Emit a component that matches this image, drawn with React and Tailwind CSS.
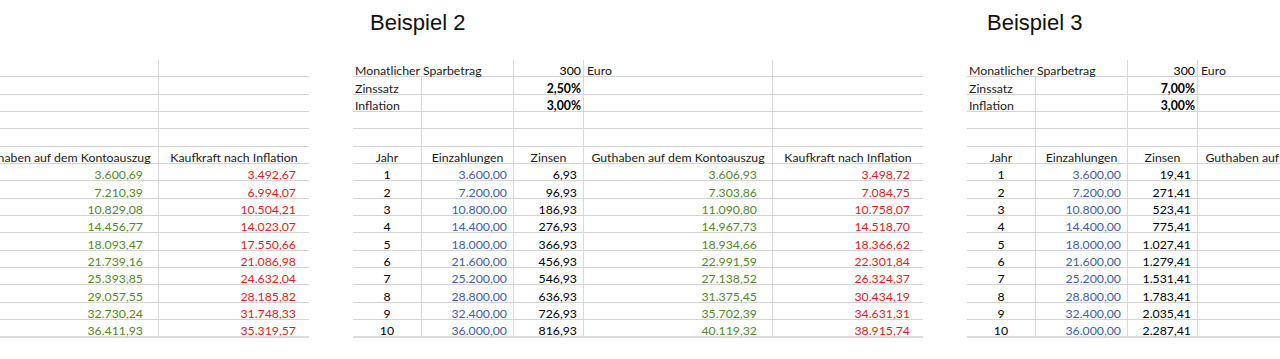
import React from "react";

const GREEN = "text-[#55882a]";
const BLUE = "text-[#3f60a6]";
const RED = "text-[#da1f26]";

const examples = [
  {
    title: "Beispiel 1",
    titleClass: "pl-[18px]",
    rate: "0,05%",
    zinsen: ["0,69", "10,39", "29,08", "56,77", "93,47", "139,16", "193,85", "257,55", "330,24", "411,93"],
    guthaben: ["3.600,69", "7.210,39", "10.829,08", "14.456,77", "18.093,47", "21.739,16", "25.393,85", "29.057,55", "32.730,24", "36.411,93"],
    kaufkraft: ["3.492,67", "6.994,07", "10.504,21", "14.023,07", "17.550,66", "21.086,98", "24.632,04", "28.185,82", "31.748,33", "35.319,57"],
  },
  {
    title: "Beispiel 2",
    titleClass: "pl-[17px]",
    rate: "2,50%",
    zinsen: ["6,93", "96,93", "186,93", "276,93", "366,93", "456,93", "546,93", "636,93", "726,93", "816,93"],
    guthaben: ["3.606,93", "7.303,86", "11.090,80", "14.967,73", "18.934,66", "22.991,59", "27.138,52", "31.375,45", "35.702,39", "40.119,32"],
    kaufkraft: ["3.498,72", "7.084,75", "10.758,07", "14.518,70", "18.366,62", "22.301,84", "26.324,37", "30.434,19", "34.631,31", "38.915,74"],
  },
  {
    title: "Beispiel 3",
    titleClass: "pl-[20px]",
    rate: "7,00%",
    zinsen: ["19,41", "271,41", "523,41", "775,41", "1.027,41", "1.279,41", "1.531,41", "1.783,41", "2.035,41", "2.287,41"],
    guthaben: ["3.619,41", "7.491,67", "11.635,08", "16.068,62", "20.812,43", "25.888,33", "31.319,55", "37.130,94", "43.349,06", "50.002,34"],
    kaufkraft: ["3.510,83", "7.061,67", "10.648,10", "14.275,04", "17.955,23", "21.681,17", "25.466,12", "29.314,04", "33.218,64", "37.209,09"],
  },
];

const einz = ["3.600,00", "7.200,00", "10.800,00", "14.400,00", "18.000,00", "21.600,00", "25.200,00", "28.800,00", "32.400,00", "36.000,00"];

const W = ["w-[69px]", "w-[92px]", "w-[70px]", "w-[189px]", "w-[150px]"];

function Cell({ i, children, className = "", noRight = false, last = false }) {
  const right = i < 4 && !noRight ? "border-r border-r-[#d9d9d9]" : "";
  const bottom = last ? "border-b-2 border-b-[#dcdcdc]" : "border-b border-b-[#d4d4d4]";
  return (
    <div className={`${W[i]} shrink-0 box-border flex items-end h-full whitespace-nowrap leading-[10px] ${right} ${bottom} ${className}`}>
      {children}
    </div>
  );
}

function Row({ children }) {
  return <div className="flex h-[17.35px]">{children}</div>;
}

function Sheet({ ex }) {
  return (
    <div className="w-[570px] shrink-0">
      <div className={`h-[60px] pt-[10px] ${ex.titleClass}`}>
        <div className="text-[22px] leading-[26px] text-[#111] font-['Liberation_Sans',Arial,sans-serif]">{ex.title}</div>
      </div>
      <div className="font-['Lato',sans-serif] text-[12.3px] text-[#1a1a1a]">
        <Row>
          <Cell i={0} noRight className="pl-[2px] overflow-visible relative z-10">Monatlicher Sparbetrag</Cell>
          <Cell i={1}></Cell>
          <Cell i={2} className="justify-end pr-[2px] text-black">300</Cell>
          <Cell i={3} className="pl-[3px]">Euro</Cell>
          <Cell i={4}></Cell>
        </Row>
        <Row>
          <Cell i={0} className="pl-[2px]">Zinssatz</Cell>
          <Cell i={1}></Cell>
          <Cell i={2} className="justify-end pr-[2px] font-bold text-black">{ex.rate}</Cell>
          <Cell i={3}></Cell>
          <Cell i={4}></Cell>
        </Row>
        <Row>
          <Cell i={0} className="pl-[2px]">Inflation</Cell>
          <Cell i={1}></Cell>
          <Cell i={2} className="justify-end pr-[2px] font-bold text-black">3,00%</Cell>
          <Cell i={3}></Cell>
          <Cell i={4}></Cell>
        </Row>
        {[0, 1].map((k) => (
          <Row key={k}>
            {[0, 1, 2, 3, 4].map((i) => (
              <Cell key={i} i={i}></Cell>
            ))}
          </Row>
        ))}
        <Row>
          <Cell i={0} className="justify-center">Jahr</Cell>
          <Cell i={1} className="justify-center">Einzahlungen</Cell>
          <Cell i={2} className="justify-center">Zinsen</Cell>
          <Cell i={3} className="justify-center">Guthaben auf dem Kontoauszug</Cell>
          <Cell i={4} className="justify-center">Kaufkraft nach Inflation</Cell>
        </Row>
        {einz.map((v, r) => {
          const last = r === 9;
          return (
            <Row key={r}>
              <Cell i={0} last={last} className="justify-center text-black">{r + 1}</Cell>
              <Cell i={1} last={last} className={`justify-end pr-[6px] ${BLUE}`}>{v}</Cell>
              <Cell i={2} last={last} className="justify-end pr-[6px] text-black">{ex.zinsen[r]}</Cell>
              <Cell i={3} last={last} className={`justify-end pr-[15px] ${GREEN}`}>{ex.guthaben[r]}</Cell>
              <Cell i={4} last={last} className={`justify-end pr-[13px] ${RED}`}>{ex.kaufkraft[r]}</Cell>
            </Row>
          );
        })}
      </div>
    </div>
  );
}

export default function App() {
  return (
    <div className="w-[1280px] h-[359px] overflow-hidden bg-white">
      <div className="flex gap-[44px] ml-[-261px]">
        {examples.map((ex) => (
          <Sheet key={ex.title} ex={ex} />
        ))}
      </div>
    </div>
  );
}
